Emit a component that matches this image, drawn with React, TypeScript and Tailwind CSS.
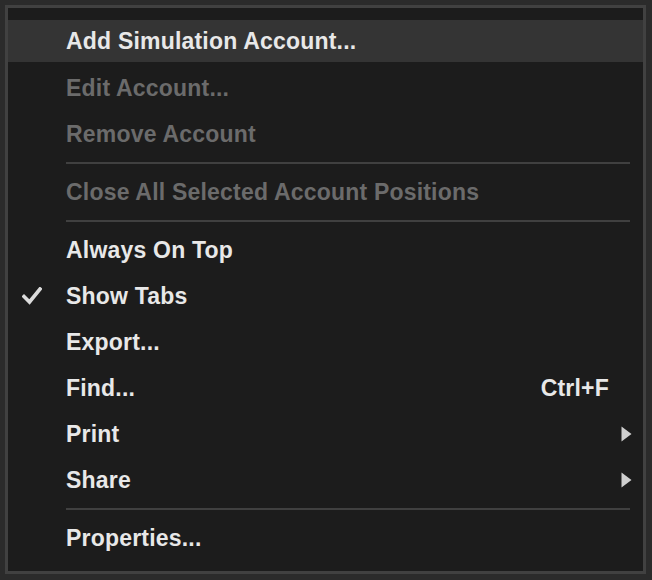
import React from "react";

type Item =
  | { type: "sep" }
  | {
      type: "item";
      label: string;
      disabled?: boolean;
      checked?: boolean;
      shortcut?: string;
      submenu?: boolean;
      highlighted?: boolean;
    };

const items: Item[] = [
  { type: "item", label: "Add Simulation Account...", highlighted: true },
  { type: "item", label: "Edit Account...", disabled: true },
  { type: "item", label: "Remove Account", disabled: true },
  { type: "sep" },
  { type: "item", label: "Close All Selected Account Positions", disabled: true },
  { type: "sep" },
  { type: "item", label: "Always On Top" },
  { type: "item", label: "Show Tabs", checked: true },
  { type: "item", label: "Export..." },
  { type: "item", label: "Find...", shortcut: "Ctrl+F" },
  { type: "item", label: "Print", submenu: true },
  { type: "item", label: "Share", submenu: true },
  { type: "sep" },
  { type: "item", label: "Properties..." },
];

function Check() {
  return (
    <svg width="20" height="18" viewBox="0 0 20 18" className="absolute left-[14px]">
      <path d="M2 9.5 L7.5 15 L18 2" fill="none" stroke="#dcdcdc" strokeWidth="3.6" strokeLinecap="square" />
    </svg>
  );
}

function Arrow() {
  return (
    <svg width="11" height="16" viewBox="0 0 11 16">
      <path d="M0.5 0.5 L10.5 8 L0.5 15.5 Z" fill="#cfcfcf" />
    </svg>
  );
}

export default function App() {
  return (
    <div
      className="w-[652px] h-[580px] bg-[#2b2b2b] pt-[5px] pl-[5px] pr-[6px] pb-[6px]"
      style={{ fontFamily: '"Liberation Sans", Arial, sans-serif' }}
    >
      <div className="h-full border-[3px] border-[#414141] bg-[#1c1c1c] pt-[11px]">
        {items.map((it, i) => {
          if (it.type === "sep") {
            return (
              <div key={i} className="h-[12px] flex items-center pl-[58px] pr-[13px]">
                <div className="h-[2px] w-full bg-[#404040]" />
              </div>
            );
          }
          return (
            <div
              key={i}
              className={
                it.highlighted
                  ? "relative h-[42px] mt-[1px] mb-[3px] flex items-center pl-[58px] pr-[34px] bg-[#343434]"
                  : "relative h-[46px] flex items-center pl-[58px] pr-[34px]"
              }
            >
              {it.checked && <Check />}
              <span
                className={
                  "flex-1 text-[23px] font-bold leading-none tracking-[0.2px] " +
                  (it.disabled ? "text-[#6b6b6b]" : "text-[#e8e8e8]")
                }
              >
                {it.label}
              </span>
              {it.shortcut && (
                <span className="text-[23px] font-bold leading-none tracking-[0.2px] text-[#e8e8e8]">{it.shortcut}</span>
              )}
              {it.submenu && (
                <span className="absolute right-[11px] top-[15px]">
                  <Arrow />
                </span>
              )}
            </div>
          );
        })}
      </div>
    </div>
  );
}
